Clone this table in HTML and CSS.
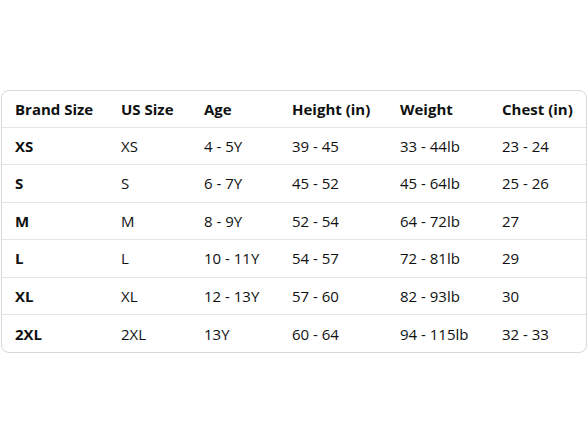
FILE: index.html
```html
<!DOCTYPE html>
<html>
<head>
<meta charset="utf-8">
<link rel="stylesheet" href="styles.css">
</head>
<body>
<div class="page">
  <div class="chart">
    <table class="size-table">
      <colgroup>
        <col class="c1"><col class="c2"><col class="c3"><col class="c4"><col class="c5"><col class="c6">
      </colgroup>
      <thead>
        <tr><th>Brand Size</th><th>US Size</th><th>Age</th><th>Height (in)</th><th>Weight</th><th>Chest (in)</th></tr>
      </thead>
      <tbody>
        <tr><td class="brand">XS</td><td>XS</td><td>4 - 5Y</td><td>39 - 45</td><td>33 - 44lb</td><td>23 - 24</td></tr>
        <tr><td class="brand">S</td><td>S</td><td>6 - 7Y</td><td>45 - 52</td><td>45 - 64lb</td><td>25 - 26</td></tr>
        <tr><td class="brand">M</td><td>M</td><td>8 - 9Y</td><td>52 - 54</td><td>64 - 72lb</td><td>27</td></tr>
        <tr><td class="brand">L</td><td>L</td><td>10 - 11Y</td><td>54 - 57</td><td>72 - 81lb</td><td>29</td></tr>
        <tr><td class="brand">XL</td><td>XL</td><td>12 - 13Y</td><td>57 - 60</td><td>82 - 93lb</td><td>30</td></tr>
        <tr><td class="brand">2XL</td><td>2XL</td><td>13Y</td><td>60 - 64</td><td>94 - 115lb</td><td>32 - 33</td></tr>
      </tbody>
    </table>
  </div>
</div>
</body>
</html>
```
FILE: styles.css
```css
html, body {
  margin: 0;
  padding: 0;
  background: #ffffff;
}
body {
  font-family: "Open Sans", "Noto Sans", sans-serif;
  color: #0f1111;
}
.page {
  width: 588px;
  height: 441px;
  padding-top: 90px;
  padding-left: 1px;
  box-sizing: border-box;
}
.chart {
  width: 586px;
  border: 1px solid #d5d9d9;
  border-radius: 8px;
  box-sizing: border-box;
  overflow: hidden;
}
.size-table {
  width: 100%;
  border-collapse: collapse;
  table-layout: fixed;
  font-size: 15px;
}
.c1 { width: 106px; }
.c2 { width: 83px; }
.c3 { width: 88px; }
.c4 { width: 108px; }
.c5 { width: 102px; }
.c6 { width: auto; }
.size-table th,
.size-table td {
  height: 37.5px;
  padding: 0 0 0 13px;
  text-align: left;
  white-space: nowrap;
  border-top: 1px solid #e3e6e6;
  line-height: 20px;
  box-sizing: border-box;
}
.size-table thead th {
  border-top: none;
  height: 36px;
  font-weight: 700;
}
.size-table td.brand {
  font-weight: 700;
}
```
